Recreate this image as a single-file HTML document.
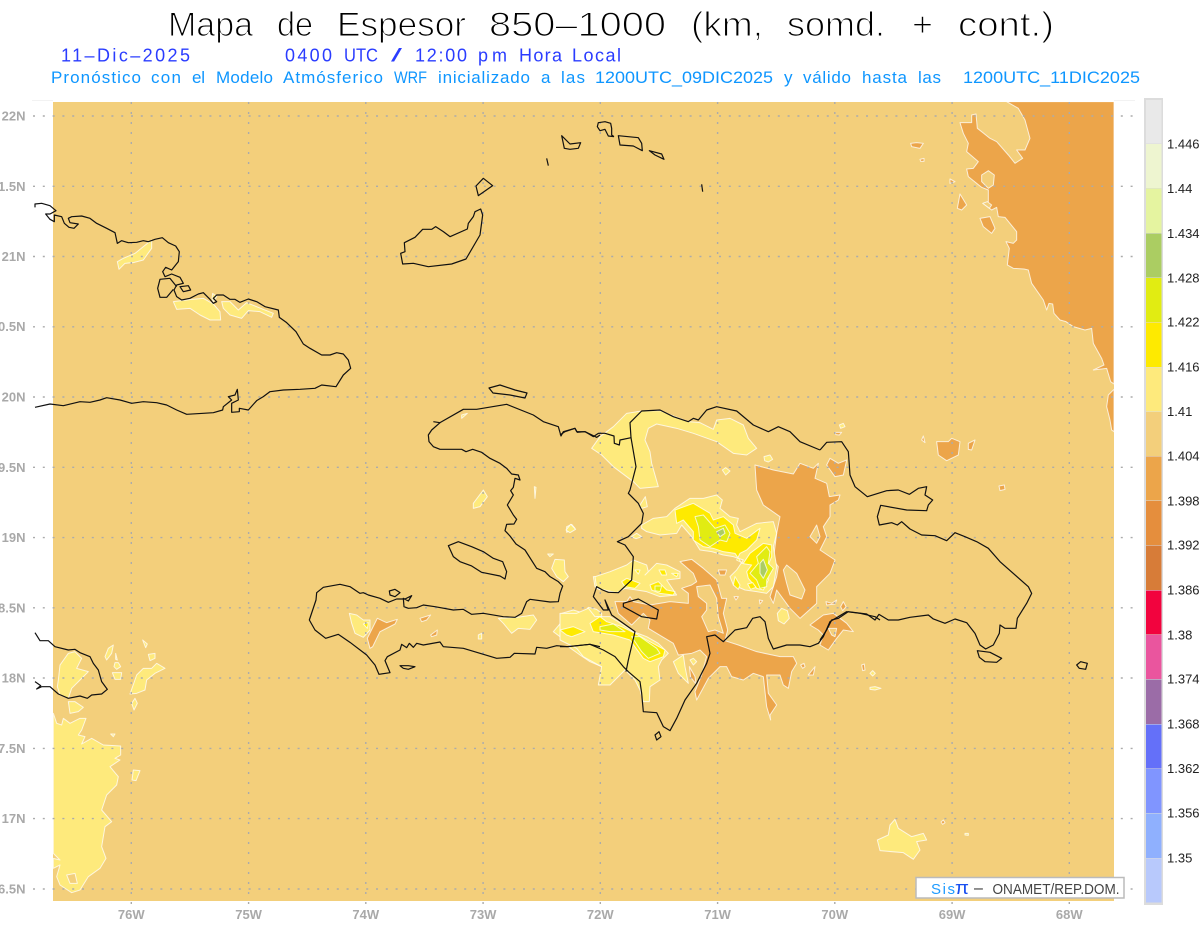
<!DOCTYPE html>
<html lang="es"><head><meta charset="utf-8"><title>Mapa de Espesor 850-1000</title>
<style>
html,body{margin:0;padding:0;background:#fff;width:1200px;height:927px;overflow:hidden}
svg{display:block}
text{font-family:"Liberation Sans",sans-serif}
.t text{font-size:34.5px;fill:#000;stroke:#fff;stroke-width:1.1}
.u text{font-size:18px;fill:#2A3CFF}
.v text{font-size:17px;fill:#0E96FF}
.f polygon{stroke:#fff;stroke-opacity:.75;stroke-width:1;vector-effect:non-scaling-stroke;stroke-linejoin:round}
.o{fill:#ECA54A}.y{fill:#FEEA7C}.s{fill:#FEEA00}.l{fill:#E1EC12}.g{fill:#ABCD62}.b{fill:#F3CF7B}
.c polygon,.c polyline{fill:none;stroke:#111;stroke-width:1.2;vector-effect:non-scaling-stroke;stroke-linejoin:round}
.a{font-size:13px;font-weight:bold;fill:#A9A9A9}
.k{font-size:13px;fill:#222}
</style></head><body>
<svg width="1200" height="927" viewBox="0 0 1200 927" xmlns="http://www.w3.org/2000/svg">
<defs><clipPath id="m"><rect x="53" y="102" width="1061" height="799"/></clipPath></defs>
<rect width="1200" height="927" fill="#fff"/>
<g class="t">
<text x="168" y="36" textLength="85" lengthAdjust="spacingAndGlyphs">Mapa</text>
<text x="277" y="36" textLength="36" lengthAdjust="spacingAndGlyphs">de</text>
<text x="337" y="36" textLength="129" lengthAdjust="spacingAndGlyphs">Espesor</text>
<text x="489" y="36" textLength="177" lengthAdjust="spacingAndGlyphs">850–1000</text>
<text x="691" y="36" textLength="72" lengthAdjust="spacingAndGlyphs">(km,</text>
<text x="787" y="36" textLength="98" lengthAdjust="spacingAndGlyphs">somd.</text>
<text x="912" y="36" textLength="21" lengthAdjust="spacingAndGlyphs">+</text>
<text x="958" y="36" textLength="96" lengthAdjust="spacingAndGlyphs">cont.)</text>
</g>
<g class="u">
<text x="61" y="61.5" textLength="129" lengthAdjust="spacing">11–Dic–2025</text>
<text x="285" y="61.5" textLength="47" lengthAdjust="spacing">0400</text>
<text x="344" y="61.5" textLength="34" lengthAdjust="spacingAndGlyphs">UTC</text>
<text x="391" y="61.5" textLength="11" lengthAdjust="spacingAndGlyphs">/</text>
<text x="415" y="61.5" textLength="52" lengthAdjust="spacing">12:00</text>
<text x="478" y="61.5" textLength="29" lengthAdjust="spacing">pm</text>
<text x="519" y="61.5" textLength="43" lengthAdjust="spacing">Hora</text>
<text x="572" y="61.5" textLength="49" lengthAdjust="spacing">Local</text>
</g>
<g class="v">
<text x="51" y="83" textLength="90" lengthAdjust="spacing">Pronóstico</text>
<text x="151" y="83" textLength="30" lengthAdjust="spacing">con</text>
<text x="192" y="83" textLength="13" lengthAdjust="spacing">el</text>
<text x="216" y="83" textLength="57" lengthAdjust="spacing">Modelo</text>
<text x="283" y="83" textLength="100" lengthAdjust="spacing">Atmósferico</text>
<text x="394" y="83" textLength="33" lengthAdjust="spacingAndGlyphs">WRF</text>
<text x="438" y="83" textLength="92" lengthAdjust="spacing">inicializado</text>
<text x="541" y="83" textLength="10" lengthAdjust="spacing">a</text>
<text x="561" y="83" textLength="24" lengthAdjust="spacing">las</text>
<text x="595" y="83" textLength="178" lengthAdjust="spacingAndGlyphs">1200UTC_09DIC2025</text>
<text x="784" y="83" textLength="9" lengthAdjust="spacing">y</text>
<text x="803" y="83" textLength="48" lengthAdjust="spacing">válido</text>
<text x="862" y="83" textLength="45" lengthAdjust="spacing">hasta</text>
<text x="918" y="83" textLength="23" lengthAdjust="spacing">las</text>
<text x="963" y="83" textLength="177" lengthAdjust="spacingAndGlyphs">1200UTC_11DIC2025</text>
</g>

<line x1="32" y1="100.5" x2="53" y2="100.5" stroke="#F2F2F2"/><line x1="1114" y1="100.5" x2="1135" y2="100.5" stroke="#F2F2F2"/>
<rect x="53" y="102" width="1061" height="799" fill="#F3CF7B"/>

<g class="f" clip-path="url(#m)">
<g transform="translate(900,100) scale(.33333)">
<polygon class="o" points="320,5 642,5 642,852 632,845 620,805 580,810 612,795 605,775 580,730 575,685 555,690 520,680 498,665 480,660 462,640 458,612 447,610 440,630 430,600 395,550 385,510 372,507 340,505 322,495 328,445 318,425 340,430 350,420 350,395 315,352 295,350 290,322 275,330 250,310 265,305 265,270 245,262 205,230 200,207 220,205 235,185 200,155 205,130 190,100 180,68 215,68 215,45 228,42 232,85 245,95 270,115 290,125 325,165 345,190 368,175 350,150 375,150 390,115 375,60 355,25"/>
<polygon class="b" points="245,225 265,212 283,225 280,255 265,265 245,245"/>
<polygon class="o" points="240,355 270,350 285,385 275,400 250,380"/>
<polygon class="o" points="642,868 625,885 620,920 630,960 635,990 642,995"/>
<polygon class="o" points="32,130 50,128 70,130 60,145 35,140"/>
<polygon class="o" points="150,237 165,245 150,250"/>
<polygon class="o" points="180,282 200,315 185,330 172,325"/>
<polygon class="o" points="60,178 72,175 72,184 62,184"/>
<polygon class="b" points="248,310 262,305 275,315 268,325"/>
</g>
<g transform="translate(0,190) scale(.33333)">
<polygon class="y" points="352,215 370,205 405,190 430,170 455,150 455,175 430,210 400,218 375,220 357,238"/>
<polygon class="y" points="520,335 575,328 610,325 640,342 660,365 662,390 630,390 600,375 570,355 530,358"/>
<polygon class="y" points="638,310 650,320 640,335 636,325"/>
<polygon class="y" points="665,335 690,335 715,360 740,338 770,350 820,370 815,382 780,365 745,362 725,385 690,375 670,355"/>
</g>
<g transform="translate(0,620) scale(.33333)">
<polygon class="y" points="160,280 170,310 185,315 190,295 210,310 240,295 258,295 245,330 235,345 255,350 245,372 275,355 310,375 362,378 362,405 345,415 360,420 330,440 355,470 350,495 320,525 305,570 335,605 315,620 305,680 318,715 300,745 265,770 240,810 215,818 180,795 170,770 180,735 160,745 160,715 180,720 160,700"/>
<polygon class="b" points="200,765 225,760 232,790 210,790"/>
<polygon class="y" points="175,180 180,135 205,100 225,95 245,115 230,145 265,155 240,180 215,205 205,235 180,225 172,200"/>
<polygon class="y" points="205,245 225,245 250,262 235,275 210,280"/>
<polygon class="y" points="315,110 325,85 340,75 335,100 320,120"/>
<polygon class="y" points="347,100 352,120 347,118"/>
<polygon class="y" points="345,128 355,128 362,140 350,148 342,140"/>
<polygon class="y" points="337,158 365,158 362,178 345,178"/>
<polygon class="y" points="428,60 442,72 437,83"/>
<polygon class="y" points="445,103 465,100 465,115 450,122"/>
<polygon class="y" points="390,222 410,165 430,145 455,145 470,130 495,145 465,160 440,180 435,210 410,220"/>
<polygon class="y" points="395,250 405,235 412,250 402,270"/>
<polygon class="y" points="400,450 420,452 408,482 396,480"/>
<polygon class="y" points="332,342 345,342 340,350"/>
</g>
<g transform="translate(280,400) scale(.33333)">
<polygon class="y" points="655,655 710,652 760,645 770,660 750,688 715,685 695,700 670,670"/>
<polygon class="y" points="820,695 850,660 845,640 880,630 912,640 925,622 950,628 965,640 965,725 860,725 840,710"/>
<polygon class="y" points="865,740 930,725 965,745 965,800 930,785 900,765"/>
<polygon class="s" points="862,685 920,695 880,708 862,705"/>
<polygon class="s" points="930,680 950,650 965,650 965,700 945,695"/>
<polygon class="y" points="545,45 562,40 545,55"/>
<polygon class="y" points="580,310 610,270 622,290 600,320 580,325"/>
<polygon class="y" points="860,380 875,373 885,385 860,397"/>
<polygon class="y" points="803,462 820,462 810,470"/>
<polygon class="y" points="815,505 825,478 853,480 855,515 865,530 850,545 830,530"/>
<polygon class="y" points="940,530 960,530 960,570 945,560"/>
<polygon class="y" points="595,705 605,700 605,717 595,717"/>
<polygon class="y" points="763,260 768,262 765,295"/>
<polygon class="y" points="208,640 230,645 250,660 270,660 270,690 250,712 225,700 215,670"/>
<polygon class="s" points="250,672 265,668 262,685"/>
<polygon class="o" points="262,715 292,655 320,668 352,658 345,672 300,695 278,740 270,745"/>
<polygon class="o" points="420,655 452,645 440,660 425,665"/>
<polygon class="o" points="452,705 472,690 470,705 455,710"/>
</g>
<g transform="translate(560,400) scale(.33333)">
<polygon class="y" points="160,80 200,40 245,33 300,32 340,48 385,65 420,68 460,88 470,60 510,55 550,75 565,115 590,145 560,165 520,160 470,125 400,100 350,85 290,72 265,85 255,120 270,155 275,190 295,260 240,265 220,245 160,200 125,165 95,145 120,110"/>
<polygon class="o" points="585,195 640,210 700,222 720,190 760,205 775,190 765,235 800,250 808,290 840,285 835,300 810,315 810,350 790,380 800,410 780,450 825,480 810,520 770,560 770,610 720,655 690,625 650,570 640,610 630,590 650,530 655,500 640,480 650,400 660,350 610,315 590,270"/>
<polygon class="b" points="750,410 770,375 780,410 770,430"/>
<polygon class="b" points="670,510 680,495 710,520 735,570 725,597 690,585 680,550"/>
<polygon class="o" points="165,605 200,605 210,590 220,605 270,615 330,605 385,610 385,580 365,565 395,555 410,545 400,520 360,485 395,478 430,505 470,540 485,595 500,595 490,640 503,690 495,722 535,735 590,755 660,770 700,770 710,790 695,815 685,865 670,855 660,825 620,825 625,880 650,915 630,945 632,960 620,920 610,830 580,820 550,840 515,830 500,800 480,800 445,835 410,900 405,875 425,825 440,770 420,750 395,760 355,765 340,730 265,685 270,660 250,640 215,675 175,640"/>
<polygon class="b" points="410,560 450,555 470,595 475,650 490,700 465,690 445,695 425,650 440,630 440,610 415,590"/>
<polygon class="o" points="388,800 405,830 408,852 392,832"/>
<polygon class="y" points="340,785 370,765 375,800 385,850 355,820"/>
<polygon class="y" points="390,780 400,775 410,785 400,795"/>
<polygon class="o" points="750,675 790,645 820,640 860,670 880,695 850,690 830,715 805,750 780,735 790,705 775,690"/>
<polygon class="b" points="805,685 830,685 825,710 815,705"/>
<polygon class="o" points="800,195 810,175 835,190 860,180 850,225 825,230"/>
<polygon class="o" points="825,97 845,97 838,105 828,104"/>
<polygon class="o" points="475,510 500,510 495,525 480,525"/>
<polygon class="o" points="765,800 760,825 745,825"/>
<polygon class="o" points="722,795 732,790 735,800 728,805"/>
<polygon class="o" points="522,590 535,590 528,600"/>
<polygon class="o" points="598,600 608,602 600,612"/>
<polygon class="o" points="850,605 858,620 848,632 842,620"/>
<polygon class="o" points="798,605 815,610 830,600 825,612 800,615"/>
<polygon class="o" points="130,545 142,545 140,555 132,555"/>
<polygon class="y" points="245,375 280,355 320,350 345,325 390,295 430,295 470,285 487,300 480,325 510,350 535,355 530,375 540,395 590,370 640,365 650,400 640,440 650,500 640,560 620,580 590,575 555,570 520,555 510,530 530,510 550,480 520,470 490,465 455,455 420,450 395,410 365,375 350,400 300,405 260,395 245,385"/>
<polygon class="s" points="345,330 400,310 450,340 460,360 490,350 520,375 525,400 560,415 600,385 590,420 560,450 540,460 530,480 550,490 570,460 610,430 635,435 635,470 620,505 625,540 610,570 590,565 565,535 560,515 575,495 545,490 525,460 490,455 460,445 430,440 400,420 400,395 370,360 350,370"/>
<polygon class="l" points="405,350 430,345 465,385 495,375 510,400 500,425 480,420 450,440 420,420 415,380"/>
<polygon class="g" points="470,395 490,385 495,400 480,410"/>
<polygon class="l" points="590,470 620,440 630,455 625,490 640,505 620,540 620,560 600,565 590,540 570,520 595,490"/>
<polygon class="g" points="600,490 610,478 622,510 610,535 600,520"/>
<polygon class="y" points="105,530 150,515 200,495 220,480 260,495 265,515 255,525 290,490 320,495 360,515 360,535 320,540 340,570 350,585 300,590 260,575 230,570 195,565 170,578 110,565"/>
<polygon class="s" points="185,545 200,535 240,550 225,565 195,560"/>
<polygon class="s" points="225,510 240,510 235,522"/>
<polygon class="s" points="297,510 315,510 320,525 305,525"/>
<polygon class="s" points="335,520 355,520 350,530"/>
<polygon class="s" points="270,555 295,545 320,570 345,575 340,585 300,580 275,570"/>
<polygon class="l" points="285,558 305,558 300,575 285,572"/>
<polygon class="y" points="0,640 50,640 85,625 105,650 150,650 175,665 220,695 260,710 295,730 325,760 305,780 295,800 300,840 270,860 268,905 250,905 240,870 225,840 205,820 195,810 150,855 115,855 125,800 70,770 50,745 0,720"/>
<polygon class="s" points="0,690 40,680 75,695 35,710 20,705"/>
<polygon class="s" points="90,670 120,650 140,665 185,680 225,700 260,720 315,750 310,770 270,785 250,775 210,720 160,705 100,695"/>
<polygon class="l" points="120,680 160,672 195,695 150,695 120,690"/>
<polygon class="l" points="215,710 240,710 290,745 300,760 265,775 245,755"/>
<polygon class="y" points="652,640 665,625 682,632 688,655 672,672 655,662"/>
<polygon class="y" points="612,170 630,165 638,178 625,186 614,182"/>
<polygon class="y" points="487,210 497,203 510,213 497,225"/>
<polygon class="y" points="238,318 256,290 262,320 246,325"/>
<polygon class="y" points="18,390 32,373 47,388 30,398"/>
<polygon class="y" points="214,410 230,400 245,410 228,416"/>
<polygon class="s" points="525,530 540,555 535,568 520,555"/>
<polygon class="s" points="563,552 578,548 588,562 572,568"/>
<polygon class="y" points="838,75 850,70 855,80 842,85"/>
</g>
<g transform="translate(820,400) scale(.33333)">
<polygon class="o" points="350,125 385,125 395,115 420,125 415,165 380,182 355,165"/>
<polygon class="o" points="445,130 465,120 455,150 445,148"/>
<polygon class="o" points="305,120 310,108 315,128"/>
<polygon class="o" points="537,258 553,255 555,268 540,272"/>
<polygon class="y" points="150,862 165,860 183,865 165,870 150,868"/>
<polygon class="y" points="150,820 158,812 166,820 158,828"/>
<polygon class="o" points="125,795 133,792 135,810 128,812"/>
</g>
<g transform="translate(860,800) scale(.33333)">
<polygon class="y" points="52,120 85,105 90,75 105,58 115,85 155,110 190,100 200,120 170,125 180,150 160,178 130,158 60,152"/>
<polygon class="o" points="243,66 250,60 255,68 248,73"/>
<polygon class="y" points="315,100 325,100 325,106 315,105"/>
</g>
</g>

<g stroke="#ABABAB" stroke-width="1.4" fill="none" stroke-dasharray="2 7.8">
<line x1="33" x2="1135" y1="116" y2="116"/><line x1="33" x2="1135" y1="186.3" y2="186.3"/><line x1="33" x2="1135" y1="256.5" y2="256.5"/><line x1="33" x2="1135" y1="326.8" y2="326.8"/><line x1="33" x2="1135" y1="397" y2="397"/><line x1="33" x2="1135" y1="467.3" y2="467.3"/><line x1="33" x2="1135" y1="537.6" y2="537.6"/><line x1="33" x2="1135" y1="607.8" y2="607.8"/><line x1="33" x2="1135" y1="678" y2="678"/><line x1="33" x2="1135" y1="748.4" y2="748.4"/><line x1="33" x2="1135" y1="818.6" y2="818.6"/><line x1="33" x2="1135" y1="889" y2="889"/>
</g>
<g stroke="#ABABAB" stroke-width="1.4" fill="none" stroke-dasharray="2 8">
<line y1="102" y2="907" x1="131.3" x2="131.3"/><line y1="102" y2="907" x1="248.6" x2="248.6"/><line y1="102" y2="907" x1="365.8" x2="365.8"/><line y1="102" y2="907" x1="483.1" x2="483.1"/><line y1="102" y2="907" x1="600.3" x2="600.3"/><line y1="102" y2="907" x1="717.6" x2="717.6"/><line y1="102" y2="907" x1="834.8" x2="834.8"/><line y1="102" y2="907" x1="952.1" x2="952.1"/><line y1="102" y2="907" x1="1069.3" x2="1069.3"/>
</g>

<g class="c">
<g transform="translate(0,190) scale(.33333)">
<polyline points="105,52 105,42 125,40 150,47 168,62 150,72 137,72 150,88 163,95 163,75 185,80 193,100 207,112 222,115 235,102 210,98 205,85 215,80 245,78 270,85 290,100 320,115 345,128 352,160 365,152 385,158 410,157 430,152 445,155 465,148 487,143 505,158 527,168 538,185 535,215 515,240 497,232 488,245 495,260 515,252 540,262 550,280 530,285 522,300 530,320 545,330 570,325 595,312 610,308 630,328 640,340 650,335 640,325 650,315 670,315 690,328 705,328 720,337 745,327 770,335 795,350 835,360 838,382 860,398 888,425 910,462 930,475 965,495 990,495 1010,488 1030,492 1045,510 1052,535 1030,555 1008,590 965,585 945,595 900,598 850,600 810,605 790,620 770,632 745,660 718,655 718,665 695,667 695,640 715,630 712,598 705,615 685,620 695,630 670,650 668,660 640,668 610,670 560,673 530,660 500,645 470,638 430,635 395,640 360,630 320,623 300,630 270,637 240,635 190,647 150,642 105,652"/>
<polyline points="530,290 510,265 480,268 473,295 480,322 500,322 520,298"/>
<polygon points="540,290 565,287 572,300 550,305"/>
</g>
<g transform="translate(280,400) scale(.33333)">
<polyline points="460,65 480,68 455,90 445,105 447,125 460,140 480,148 545,148 558,155 578,148 605,157 630,175 660,190 680,205 695,222 715,225 720,240 705,235 700,262 692,272 700,285 682,315 700,345 710,358 702,372 680,373 675,392 690,408 708,432 735,450 770,505 795,515 810,530 835,545 848,558 840,580 835,605 810,606 750,598 740,605 725,640 705,652 670,650 610,640 575,643 550,628 520,630 465,620 430,615 410,623 385,625 372,620 370,595 385,603 395,587 375,597 350,597 325,607 300,595 265,585 250,578 240,580 210,560 180,553 130,562 110,578 108,600 88,660 105,690 137,715 175,703 210,727 260,765 285,795 297,823 330,818 315,782 322,770 360,750 365,733 380,743 388,730 400,742 410,730 430,735 480,726 490,740 550,745 600,760 650,775 690,772 703,760 765,762 770,742 800,745 830,737 865,740 930,733 960,740"/>
<polyline points="480,68 550,28 590,28 680,13 760,45 790,65 835,80 843,108 850,95 885,85 892,97 915,95 950,112 960,105"/>
<polygon points="505,437 535,425 575,440 610,455 640,475 668,485 680,515 675,537 660,528 605,517 575,498 540,485 520,470"/>
<polygon points="328,573 345,568 360,578 345,590 330,585"/>
<polygon points="360,797 385,797 405,800 385,808 370,805"/>
</g>
<g transform="translate(560,400) scale(.33333)">
<polyline points="0,740 20,740 90,733 130,750 165,770 190,800 205,815 240,845 245,880 250,935 290,938 310,980 330,992 350,955 375,900 410,850 440,790 450,760 440,710 465,705 490,725 525,690 560,683 578,655 600,650 615,665 625,715 640,747 680,735 720,735 750,740 775,730 790,710 810,665 860,635 900,640 945,650 960,660"/>
<polyline points="780,150 720,125 690,95 655,80 625,95 580,75 530,33 470,20 440,30 415,60 400,55 385,65 340,50 300,30 245,33 210,68 213,113 180,120 178,135 163,130 162,108 135,100 115,100 100,110 75,95 50,95 45,85 15,95 0,105"/>
<polyline points="213,113 228,200 210,270 205,280 235,310 250,340 245,370 205,410 172,425 195,435 220,470 215,540 175,578 145,577 128,570 110,560 100,590 130,630 145,630 135,600 155,645 225,695 205,780 198,815"/>
<polygon points="190,610 235,597 295,630 290,657 245,650 190,620"/>
<polygon points="285,1005 297,995 303,1010 290,1020"/>
</g>
<g transform="translate(820,400) scale(.33333)">
<polyline points="0,720 20,690 35,660 55,655 85,635 140,642 165,660 177,643 205,660 235,660 270,652 325,645 340,657 375,670 405,657 440,668 465,700 480,735 497,747 520,735 538,700 540,675 555,685 588,685 592,655 620,610 635,580 625,560 540,485 505,445 470,425 435,410 405,398 380,422 345,407 305,405 270,387 245,365 232,375 215,368 178,375 172,350 182,316 260,330 320,332 325,315 338,300 315,285 320,260 295,265 268,283 235,270 200,272 142,290 105,260 90,225 85,155 65,125 20,127 0,150"/>
<polygon points="472,752 510,757 545,775 530,787 495,785 478,772"/>
<polygon points="770,795 782,785 802,790 797,808 778,805"/>
</g>
<polygon points="489,388 500,385 515,390 527,393 525,398 510,395 493,393"/>
<g transform="translate(380,100) scale(.33333)">
<polygon points="68,492 62,460 75,455 73,428 105,412 128,388 155,388 167,380 190,395 210,410 262,387 265,370 280,350 285,335 302,327 308,345 300,405 258,477 215,492 145,500 100,490"/>
<polygon points="288,258 310,235 338,257 295,287"/>
<polygon points="545,107 570,132 602,128 595,145 570,148 553,145"/>
<polyline points="500,175 505,197"/>
<polyline points="702,110 685,108 675,88 660,92 652,80 655,68 675,65 692,70 695,85 695,105 702,110"/>
<polygon points="715,107 775,113 785,130 787,152 760,138 720,135"/>
<polygon points="808,152 845,162 852,178 825,165"/>
<polyline points="965,253 968,275"/>
</g>
<g transform="translate(0,620) scale(.33333)">
<polyline points="105,38 120,62 145,62 165,80 205,90 225,88 240,98 270,110 280,130 295,150 305,185 322,208 305,222 275,225 262,235 240,228 205,235 175,222 150,200 125,200 110,207 122,197 105,185"/>
</g>
</g>

<g class="a" text-anchor="end">
<text x="25.5" y="120.5">22N</text><text x="25.5" y="191">1.5N</text><text x="25.5" y="261">21N</text><text x="25.5" y="331">0.5N</text><text x="25.5" y="401.5">20N</text><text x="25.5" y="472">9.5N</text><text x="25.5" y="542">19N</text><text x="25.5" y="612.5">8.5N</text><text x="25.5" y="682.5">18N</text><text x="25.5" y="753">7.5N</text><text x="25.5" y="823">17N</text><text x="25.5" y="893.5">6.5N</text>
</g>
<g class="a" text-anchor="middle">
<text x="131.3" y="919">76W</text><text x="248.6" y="919">75W</text><text x="365.8" y="919">74W</text><text x="483.1" y="919">73W</text><text x="600.3" y="919">72W</text><text x="717.6" y="919">71W</text><text x="834.8" y="919">70W</text><text x="952.1" y="919">69W</text><text x="1069.3" y="919">68W</text>
</g>

<rect x="1144" y="98" width="19" height="807" fill="#DCDCDC"/>
<g>
<rect x="1146" y="100" width="15.5" height="43.5" fill="#E9E9E9"/>
<rect x="1146" y="144" width="15.5" height="44" fill="#EEF5D0"/>
<rect x="1146" y="188.5" width="15.5" height="44.5" fill="#E5F4A0"/>
<rect x="1146" y="233.5" width="15.5" height="44" fill="#ABCD62"/>
<rect x="1146" y="278" width="15.5" height="44" fill="#E1EC12"/>
<rect x="1146" y="322.5" width="15.5" height="44.5" fill="#FEEA00"/>
<rect x="1146" y="367.5" width="15.5" height="44" fill="#FEEA7C"/>
<rect x="1146" y="412" width="15.5" height="44" fill="#F3CF7B"/>
<rect x="1146" y="456.5" width="15.5" height="44" fill="#ECA54A"/>
<rect x="1146" y="501" width="15.5" height="44" fill="#E58E3D"/>
<rect x="1146" y="545.5" width="15.5" height="44.5" fill="#D77C38"/>
<rect x="1146" y="590.5" width="15.5" height="44" fill="#F2033E"/>
<rect x="1146" y="635" width="15.5" height="44" fill="#EA559E"/>
<rect x="1146" y="679.5" width="15.5" height="44.5" fill="#9B6CA7"/>
<rect x="1146" y="724.5" width="15.5" height="44" fill="#6470F9"/>
<rect x="1146" y="769" width="15.5" height="44" fill="#8095FF"/>
<rect x="1146" y="813.5" width="15.5" height="44.5" fill="#8FB0FE"/>
<rect x="1146" y="858.5" width="15.5" height="44" fill="#B8C9FC"/>
</g>
<g class="k">
<text x="1167" y="148.5">1.446</text><text x="1167" y="193">1.44</text><text x="1167" y="238">1.434</text><text x="1167" y="282.5">1.428</text><text x="1167" y="326.5">1.422</text><text x="1167" y="371.5">1.416</text><text x="1167" y="416">1.41</text><text x="1167" y="460.5">1.404</text><text x="1167" y="505.5">1.398</text><text x="1167" y="549.5">1.392</text><text x="1167" y="594.5">1.386</text><text x="1167" y="639.5">1.38</text><text x="1167" y="683.5">1.374</text><text x="1167" y="728.5">1.368</text><text x="1167" y="773">1.362</text><text x="1167" y="817.5">1.356</text><text x="1167" y="862.5">1.35</text>
</g>

<rect x="916" y="877.5" width="208" height="20.5" fill="#fff" stroke="#BBBBBB" stroke-width="1.5"/>
<text x="931" y="894" font-size="15" fill="#1E9BFF" textLength="24" lengthAdjust="spacing">Sis</text>
<text x="955" y="894" font-size="18" fill="#1A50F0" textLength="14" lengthAdjust="spacingAndGlyphs">π</text>
<text x="974" y="893" font-size="16" fill="#333">–</text>
<text x="992.5" y="894" font-size="14.5" fill="#444" textLength="127" lengthAdjust="spacingAndGlyphs">ONAMET/REP.DOM.</text>
</svg>
</body></html>
